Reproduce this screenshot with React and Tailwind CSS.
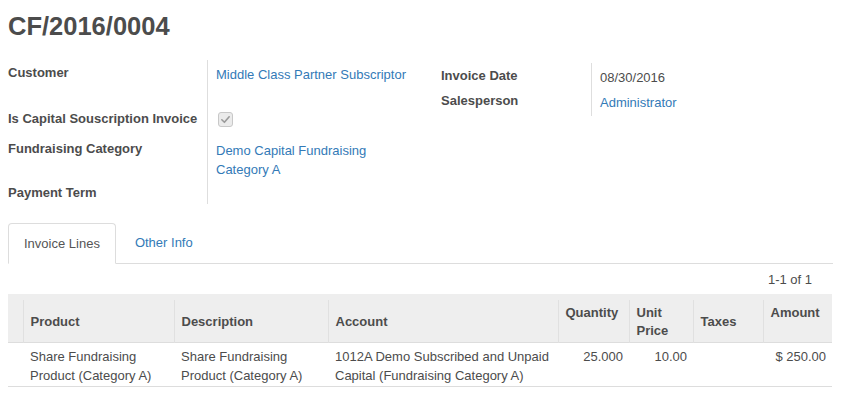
import React from "react";

const FieldRow = ({ label, labelWidth, height, children }) => (
  <div className="flex" style={{ height }}>
    <div className={`${labelWidth} shrink-0 pt-[3px] font-bold leading-[19px]`}>{label}</div>
    <div className="flex-1 border-l border-[#dedede] pl-[8px] pt-[5px] leading-[19px]">{children}</div>
  </div>
);

const Link = ({ children }) => <span className="text-[#337ab7]">{children}</span>;

const CheckedBox = () => (
  <div className="mt-[1px] ml-[2px] flex h-[15px] w-[15px] items-center justify-center rounded-[3px] border border-[#c8c8c8] bg-[#ebebeb]">
    <svg width="11" height="11" viewBox="0 0 12 12">
      <path d="M2 6.3 L4.8 9 L10 3" fill="none" stroke="#9a9a9a" strokeWidth="1.8" strokeLinecap="round" strokeLinejoin="round" />
    </svg>
  </div>
);

const columns = [
  { key: "handle", label: "", w: "w-[15px]" },
  { key: "product", label: "Product", w: "w-[151px]", align: "middle" },
  { key: "description", label: "Description", w: "w-[154px]", align: "middle" },
  { key: "account", label: "Account", w: "w-[230px]", align: "middle" },
  { key: "quantity", label: "Quantity", w: "w-[71px]", align: "top", num: true },
  { key: "price", label: "Unit Price", w: "w-[64px]", align: "top", num: true },
  { key: "taxes", label: "Taxes", w: "w-[70px]", align: "middle", num: true },
  { key: "amount", label: "Amount", w: "w-[69px]", align: "top", num: true },
];

const line = {
  handle: "",
  product: "Share Fundraising Product (Category A)",
  description: "Share Fundraising Product (Category A)",
  account: "1012A Demo Subscribed and Unpaid Capital (Fundraising Category A)",
  quantity: "25.000",
  price: "10.00",
  taxes: "",
  amount: "$ 250.00",
};

export default function App() {
  return (
    <div
      className="min-h-[405px] w-[845px] bg-white pl-[8px] pr-[12px] text-[13px] text-[#4c4c4c]"
      style={{ fontFamily: '"Liberation Sans", Arial, sans-serif' }}
    >
      <h1 className="pt-[11px] text-[25.5px] font-bold leading-[30px]">CF/2016/0004</h1>

      <div className="mt-[19px] flex items-start">
        <div className="w-[433px] shrink-0 pr-[25px]">
          <FieldRow label="Customer" labelWidth="w-[199px]" height={46}>
            <Link>Middle Class Partner Subscriptor</Link>
          </FieldRow>
          <FieldRow label="Is Capital Souscription Invoice" labelWidth="w-[199px]" height={30}>
            <CheckedBox />
          </FieldRow>
          <FieldRow label="Fundraising Category" labelWidth="w-[199px]" height={44}>
            <Link>
              Demo Capital Fundraising
              <br />
              Category A
            </Link>
          </FieldRow>
          <FieldRow label="Payment Term" labelWidth="w-[199px]" height={24} />
        </div>

        <div className="mt-[3px] flex-1">
          <FieldRow label="Invoice Date" labelWidth="w-[150px]" height={25}>
            08/30/2016
          </FieldRow>
          <FieldRow label="Salesperson" labelWidth="w-[150px]" height={28}>
            <Link>Administrator</Link>
          </FieldRow>
        </div>
      </div>

      <div className="mt-[19px] flex border-b border-[#dddddd]">
        <div className="-mb-px mr-[2px] rounded-t-[4px] border border-[#dddddd] border-b-white bg-white px-[15px] py-[10px] leading-[19px] text-[#555555]">
          Invoice Lines
        </div>
        <div className="px-[17px] py-[10px] leading-[19px] text-[#337ab7]">Other Info</div>
      </div>

      <div className="mt-[7px] flex justify-end pr-[21px] leading-[18px]">1-1 of 1</div>

      <table className="mt-[5px] w-[824px] table-fixed border-collapse">
        <colgroup>
          {columns.map((c) => (
            <col key={c.key} className={c.w} />
          ))}
        </colgroup>
        <thead>
          <tr className="h-[6px] bg-[#eeeeee]">
            <th colSpan={columns.length} className="h-[6px] p-0" />
          </tr>
          <tr className="h-[42px] border-b border-[#dddddd] bg-[#eeeeee]">
            {columns.map((c, i) => (
              <th
                key={c.key}
                className={`${i > 0 ? "border-l border-[#e0e0e0]" : ""} ${
                  c.align === "top" ? "align-top" : "align-middle"
                } px-[7px] pt-[4px] pb-[2px] text-left font-bold leading-[18px]`}
              >
                {c.label}
              </th>
            ))}
          </tr>
        </thead>
        <tbody>
          <tr className="border-b border-[#dddddd]">
            {columns.map((c) => (
              <td
                key={c.key}
                className={`${c.num ? "pr-[6px] text-right" : "pl-[7px] pr-[6px] text-left"} pt-[4px] pb-[1px] align-top leading-[19px]`}
              >
                {line[c.key]}
              </td>
            ))}
          </tr>
        </tbody>
      </table>
    </div>
  );
}
